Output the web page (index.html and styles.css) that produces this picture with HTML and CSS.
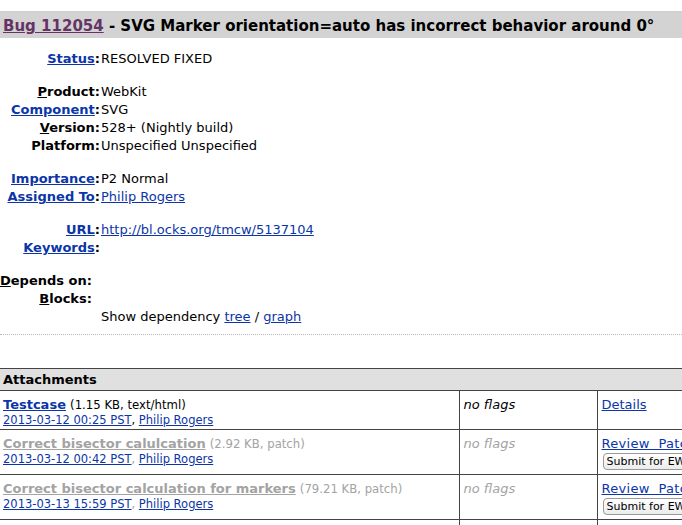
FILE: index.html
```html
<!DOCTYPE html>
<html>
<head>
<meta charset="utf-8">
<link rel="stylesheet" href="styles.css">
</head>
<body>
<div class="page">
  <div class="above"></div>
  <div class="titlebar"><a class="visited" href="#">Bug 112054</a> - SVG Marker orientation=auto has incorrect behavior around 0°</div>

  <table class="fields status-tbl">
    <tr><th><a href="#">Status</a>:</th><td>RESOLVED FIXED</td></tr>
  </table>

  <table class="fields">
    <tr><th><u>P</u>roduct:</th><td>WebKit</td></tr>
    <tr><th><a href="#">Component</a>:</th><td>SVG</td></tr>
    <tr><th><u>V</u>ersion:</th><td>528+ (Nightly build)</td></tr>
    <tr><th>Platform:</th><td>Unspecified Unspecified</td></tr>
  </table>

  <table class="fields">
    <tr><th><a href="#">Importance</a>:</th><td>P2 Normal</td></tr>
    <tr><th><a href="#">Assigned To</a>:</th><td><a href="#">Philip Rogers</a></td></tr>
  </table>

  <table class="fields">
    <tr><th><a href="#">URL</a>:</th><td><a href="#">http://bl.ocks.org/tmcw/5137104</a></td></tr>
    <tr><th><a href="#">Keywords</a>:</th><td></td></tr>
  </table>

  <table class="fields deps">
    <tr><th><u>D</u>epends on:</th><td></td></tr>
    <tr><th><u>B</u>locks:</th><td></td></tr>
    <tr><th></th><td class="showdep">Show dependency <a href="#">tree</a> / <a href="#">graph</a></td></tr>
  </table>

  <div class="dotted"></div>

  <table class="attachments">
    <colgroup><col class="w1"><col class="w2"><col class="w3"></colgroup>
    <tr class="head"><th colspan="3">Attachments</th></tr>
    <tr>
      <td class="c1">
        <div class="atitle"><a class="aname" href="#">Testcase</a> <span class="meta">(1.15 KB, text/html)</span></div>
        <div class="adate"><a href="#">2013-03-12 00:25 PST</a>, <a href="#">Philip Rogers</a></div>
      </td>
      <td class="c2"><i>no flags</i></td>
      <td class="c3"><a href="#">Details</a></td>
    </tr>
    <tr class="obsolete">
      <td class="c1">
        <div class="atitle"><a class="aname" href="#">Correct bisector calulcation</a> <span class="meta">(2.92 KB, patch)</span></div>
        <div class="adate"><a href="#">2013-03-12 00:42 PST</a><span class="comma">,</span> <a href="#">Philip Rogers</a></div>
      </td>
      <td class="c2"><i>no flags</i></td>
      <td class="c3"><div class="c3line"><a href="#">Review&nbsp; Patch</a> | <a href="#">Details</a> | <a href="#">Formatted Diff</a></div><div><button class="ews">Submit for EWS analysis</button></div></td>
    </tr>
    <tr class="obsolete">
      <td class="c1">
        <div class="atitle"><a class="aname" href="#">Correct bisector calculation for markers</a> <span class="meta">(79.21 KB, patch)</span></div>
        <div class="adate"><a href="#">2013-03-13 15:59 PST</a><span class="comma">,</span> <a href="#">Philip Rogers</a></div>
      </td>
      <td class="c2"><i>no flags</i></td>
      <td class="c3"><div class="c3line"><a href="#">Review&nbsp; Patch</a> | <a href="#">Details</a> | <a href="#">Formatted Diff</a></div><div><button class="ews">Submit for EWS analysis</button></div></td>
    </tr>
    <tr class="more">
      <td class="c1"></td><td class="c2"></td><td class="c3"></td>
    </tr>
  </table>
</div>
</body>
</html>
```
FILE: styles.css
```css
html, body {
  margin: 0;
  padding: 0;
  background: #fff;
  overflow: hidden;
}
body {
  font-family: "DejaVu Sans", Verdana, sans-serif;
  font-size: 13px;
  color: #000;
}
.page {
  width: 682px;
  height: 525px;
  overflow: hidden;
}
a {
  color: #0b35a8;
  text-decoration: underline;
}
a.visited {
  color: #663366;
}
.above {
  box-sizing: border-box;
  height: 12px;
  border-bottom: 1px solid #cfcfcf;
}
.titlebar {
  background: #d3d3d3;
  height: 26px;
  line-height: 26px;
  padding-top: 1px;
  box-sizing: border-box;
  font-size: 15px;
  font-weight: bold;
  padding-left: 3px;
  white-space: nowrap;
}
.fields {
  border-collapse: collapse;
  margin-top: 15px;
}
.status-tbl {
  margin-top: 12px;
}
.fields th, .fields td {
  padding: 0;
  height: 18px;
  line-height: 18px;
  vertical-align: middle;
  white-space: nowrap;
}
.fields th {
  width: 100px;
  text-align: right;
  font-weight: bold;
}
.fields th a {
  color: #0b35a8;
}
.fields td {
  padding-left: 1px;
}
.deps th {
  width: 90px;
}
.deps td.showdep {
  padding-left: 9px;
}
.dotted {
  margin-top: 8px;
  border-top: 1px dotted #b8b8b8;
  height: 0;
}
.attachments {
  margin-top: 33px;
  border-collapse: collapse;
  width: 820px;
  table-layout: fixed;
}
.attachments col.w1 { width: 459px; }
.attachments col.w2 { width: 138px; }
.attachments col.w3 { width: 223px; }
.attachments th, .attachments td {
  border: 1px solid #444;
  border-left: none;
}
.attachments .head th {
  background: #e0e0e0;
  text-align: left;
  font-weight: bold;
  height: 21px;
  padding: 0 3px;
  line-height: 21px;
}
.attachments td {
  vertical-align: top;
  padding: 6px 4px 1px;
  white-space: nowrap;
  overflow: hidden;
}
.attachments td.c1 {
  padding-left: 3px;
}
.atitle {
  line-height: 16px;
}
.aname {
  font-weight: bold;
}
.meta {
  font-size: 11.7px;
}
.adate {
  font-size: 11.5px;
  line-height: 15px;
}
.c3line {
  line-height: 16px;
  letter-spacing: 0.3px;
}
.obsolete .aname,
.obsolete .meta,
.obsolete .comma,
.obsolete i {
  color: #a3a3a3;
}
.ews {
  font-family: "DejaVu Sans", Verdana, sans-serif;
  font-size: 11px;
  margin: 1px 0 3px 1px;
  padding: 0 3px;
  height: 17px;
  border: 1px solid #9a9a9a;
  border-radius: 4px;
  background: linear-gradient(#ffffff, #ececec);
  color: #000;
}
.more td {
  height: 20px;
  padding: 0;
}
```
